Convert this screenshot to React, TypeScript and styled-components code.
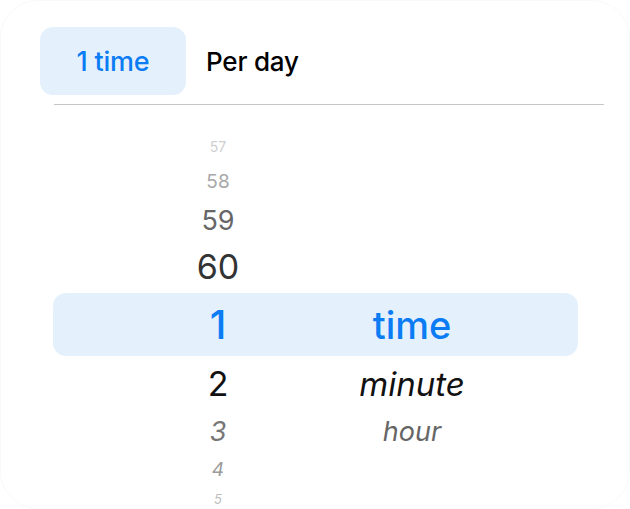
import styled, { createGlobalStyle } from 'styled-components';

const GlobalStyle = createGlobalStyle`
  html, body {
    margin: 0;
    padding: 0;
    background: #ffffff;
  }
  body {
    font-family: Inter, "Noto Sans", "Liberation Sans", sans-serif;
  }
`;

type Row = {
  num: string;
  unit?: string;
  height: number;
  size: number;
  unitSize?: number;
  color: string;
  italic?: boolean;
  selected?: boolean;
};

const rows: Row[] = [
  { num: '57', height: 32, size: 14, color: '#cfcfcf' },
  { num: '58', height: 36, size: 19, color: '#a8a8a8' },
  { num: '59', height: 42, size: 27, color: '#666666' },
  { num: '60', height: 52, size: 34, color: '#333333' },
  { num: '1', unit: 'time', height: 63, size: 40, unitSize: 38, color: '#0b7cf4', selected: true },
  { num: '2', unit: 'minute', height: 56, size: 34, unitSize: 33, color: '#111111' },
  { num: '3', unit: 'hour', height: 38, size: 27, unitSize: 27, color: '#777777', italic: true },
  { num: '4', height: 38, size: 19, color: '#9a9a9a', italic: true },
  { num: '5', height: 22, size: 13, color: '#bdbdbd', italic: true },
];

export default function App() {
  return (
    <>
      <GlobalStyle />
      <Card>
        <Tabs>
          <ActiveTab>1 time</ActiveTab>
          <Tab>Per day</Tab>
        </Tabs>
        <Divider />
        <Wheel>
          {rows.map((row) => (
            <WheelRow key={row.num} $height={row.height} $selected={row.selected}>
              <NumCell $size={row.size} $color={row.color} $italic={row.italic} $selected={row.selected}>
                {row.num}
              </NumCell>
              <UnitCell
                $size={row.unitSize || row.size}
                $color={row.num === '3' ? '#666666' : row.color}
                $italic={!row.selected}
                $selected={row.selected}
              >
                {row.unit}
              </UnitCell>
            </WheelRow>
          ))}
        </Wheel>
      </Card>
    </>
  );
}

const Card = styled.div`
  box-sizing: border-box;
  width: 630px;
  height: 509px;
  border: 1px solid rgba(0, 0, 0, 0.025);
  border-radius: 38px;
  background: #ffffff;
  overflow: hidden;
  padding-top: 26px;
`;

const Tabs = styled.div`
  display: flex;
  align-items: center;
  padding-left: 39px;
  height: 68px;
`;

const ActiveTab = styled.div`
  height: 68px;
  width: 146px;
  box-sizing: border-box;
  display: flex;
  align-items: center;
  justify-content: center;
  border-radius: 13px;
  background: #e4f1fd;
  color: #0b7cf4;
  font-size: 27px;
  font-weight: 500;
  letter-spacing: -0.2px;
`;

const Tab = styled.div`
  margin-left: 20px;
  color: #000000;
  font-size: 26px;
  font-weight: 500;
  letter-spacing: -0.2px;
`;

const Divider = styled.div`
  height: 1px;
  background: #c6c6c6;
  margin: 9px 25px 0 53px;
`;

const Wheel = styled.div`
  display: flex;
  flex-direction: column;
  margin: 26px 51px 0 52px;
`;

const WheelRow = styled.div<{ $height: number; $selected?: boolean }>`
  display: grid;
  grid-template-columns: 200px 188px;
  padding-left: 65px;
  align-items: center;
  height: ${(p) => p.$height}px;
  border-radius: ${(p) => (p.$selected ? '13px' : '0')};
  background: ${(p) => (p.$selected ? '#e4f1fd' : 'transparent')};
`;

const NumCell = styled.div<{ $size: number; $color: string; $italic?: boolean; $selected?: boolean }>`
  text-align: center;
  font-size: ${(p) => p.$size}px;
  line-height: 1;
  color: ${(p) => p.$color};
  font-style: ${(p) => (p.$italic ? 'italic' : 'normal')};
  font-weight: ${(p) => (p.$selected ? 500 : 400)};
`;

const UnitCell = styled.div<{ $size: number; $color: string; $italic?: boolean; $selected?: boolean }>`
  text-align: center;
  white-space: nowrap;
  font-size: ${(p) => p.$size}px;
  line-height: 1;
  color: ${(p) => p.$color};
  font-style: ${(p) => (p.$italic ? 'italic' : 'normal')};
  font-weight: ${(p) => (p.$selected ? 500 : 400)};
`;
